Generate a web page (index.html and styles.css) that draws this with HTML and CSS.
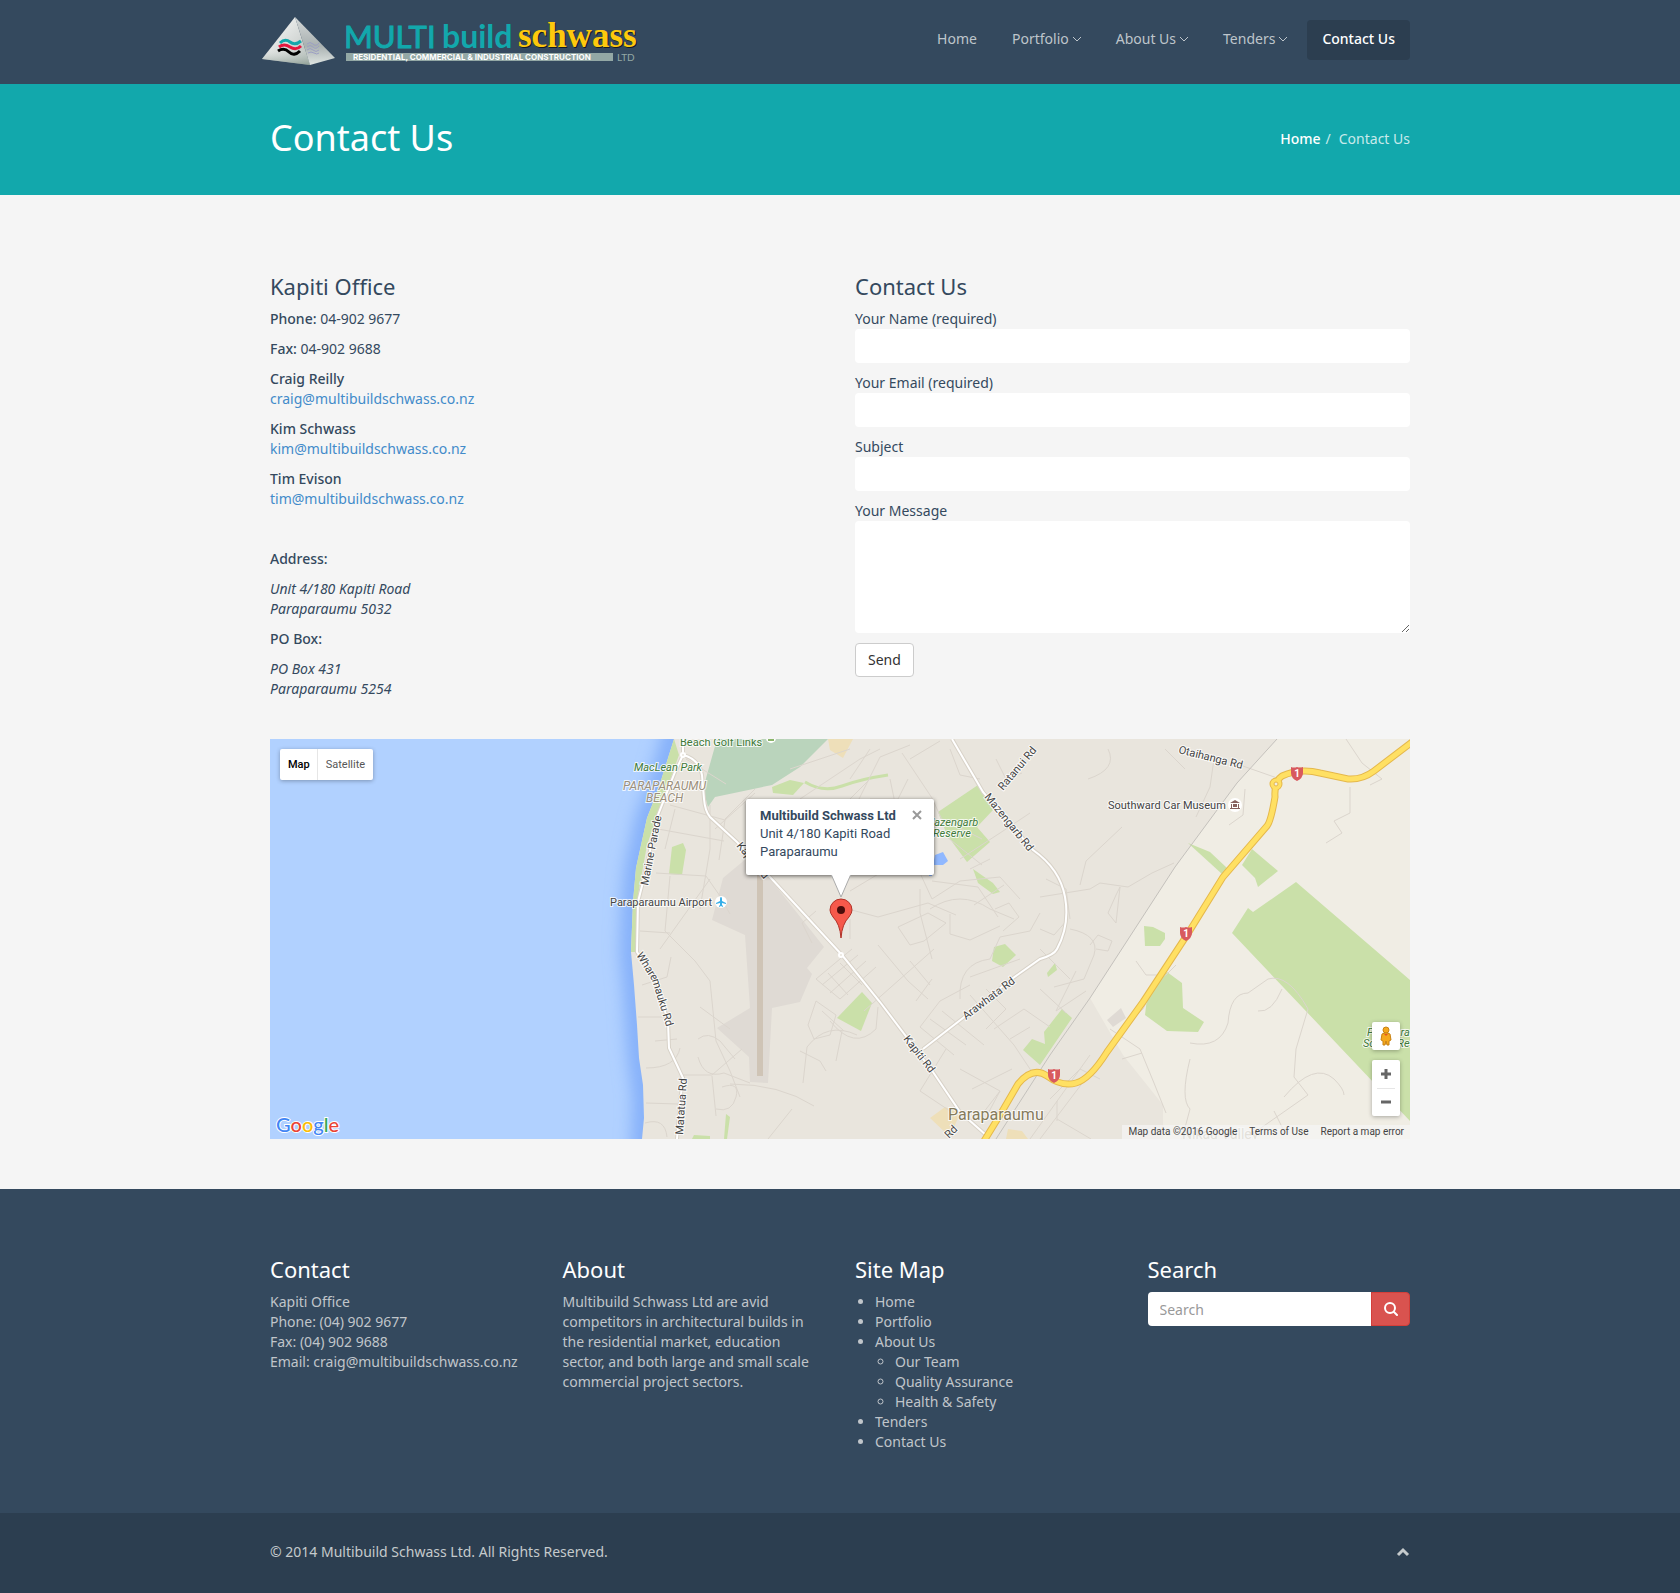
FILE: index.html
```html
<!DOCTYPE html>
<html lang="en">
<head>
<meta charset="utf-8">
<meta name="viewport" content="width=device-width, initial-scale=1">
<title>Contact Us | Multibuild Schwass Ltd</title>
<link rel="stylesheet" href="styles.css">
</head>
<body>
<header class="site-header">
  <div class="container header-row">
    <a class="logo" href="#" aria-label="Multibuild Schwass Ltd">
      <svg width="376" height="54" viewBox="0 0 376 54">
        <defs>
          <linearGradient id="face-left" x1="0" y1="0" x2="1" y2="1">
            <stop offset="0" stop-color="#ffffff"/><stop offset="0.6" stop-color="#d4d8d6"/><stop offset="1" stop-color="#a9b5af"/>
          </linearGradient>
          <linearGradient id="face-right" x1="0" y1="0" x2="0" y2="1">
            <stop offset="0" stop-color="#d5d9d9"/><stop offset="0.6" stop-color="#a9b1b1"/><stop offset="1" stop-color="#dfe5e2"/>
          </linearGradient>
          <linearGradient id="face-base" x1="0" y1="0" x2="0" y2="1">
            <stop offset="0" stop-color="#ffffff" stop-opacity="0"/><stop offset="1" stop-color="#7d9186"/>
          </linearGradient>
        </defs>
        <path d="M33 3 L0 45 L48 51Z" fill="url(#face-left)"/>
        <path d="M10 32 L0 45 L48 51 L45 36Z" fill="url(#face-base)" opacity=".6"/>
        <path d="M33 3 L48 51 L73 44Z" fill="url(#face-right)"/>
        <g fill="none" stroke-width="3">
          <path d="M18 29q5-5 10-1t11-1" stroke="#12a8ac"/>
          <path d="M17 33q5-4 11 0t11-1" stroke="#e3173e"/>
          <path d="M16 37q6-4 11 1t11-1" stroke="#000"/>
        </g>
        <g fill="none" stroke="#9c9fc4" stroke-width="1">
          <path d="M45 30q3-3 6 0t6-1"/><path d="M45 33q3-3 6 0t6-1"/><path d="M45 36q3-3 6 0t6 0"/><path d="M46 39q3-2 6 0t5 0"/>
        </g>
        <text class="logo-multi" x="82" y="34">MULTI</text>
        <text class="logo-build" x="180" y="34">build</text>
        <text class="logo-schwass logo-shade" x="257" y="34">schwass</text>
        <text class="logo-schwass" x="256" y="33">schwass</text>
        <rect x="84" y="39" width="267" height="8" fill="#93a8a5"/>
        <text class="logo-tag" x="91" y="46">RESIDENTIAL, COMMERCIAL &amp; INDUSTRIAL CONSTRUCTION</text>
        <text class="logo-ltd" x="355" y="47">LTD</text>
      </svg>
    </a>
    <nav class="main-nav" aria-label="Main">
      <a href="#">Home</a>
      <a href="#">Portfolio <svg class="chevron" viewBox="0 0 8 6"><path d="M0 1l4 4 4-4"/></svg></a>
      <a href="#">About Us <svg class="chevron" viewBox="0 0 8 6"><path d="M0 1l4 4 4-4"/></svg></a>
      <a href="#">Tenders <svg class="chevron" viewBox="0 0 8 6"><path d="M0 1l4 4 4-4"/></svg></a>
      <a class="active" href="#">Contact Us</a>
    </nav>
  </div>
</header>

<section class="title-bar">
  <div class="container title-row">
    <h1>Contact Us</h1>
    <ol class="breadcrumb">
      <li><a href="#">Home</a></li>
      <li>Contact Us</li>
    </ol>
  </div>
</section>

<main class="container content">
  <div class="columns">
    <section class="office">
      <h2>Kapiti Office</h2>
      <p><strong>Phone:</strong> 04-902 9677</p>
      <p><strong>Fax:</strong> 04-902 9688</p>
      <p><strong>Craig Reilly</strong><br><a href="#">craig@multibuildschwass.co.nz</a></p>
      <p><strong>Kim Schwass</strong><br><a href="#">kim@multibuildschwass.co.nz</a></p>
      <p><strong>Tim Evison</strong><br><a href="#">tim@multibuildschwass.co.nz</a></p>
      <p class="spaced"><strong>Address:</strong></p>
      <address>Unit 4/180 Kapiti Road<br>Paraparaumu 5032</address>
      <p><strong>PO Box:</strong></p>
      <address>PO Box 431<br>Paraparaumu 5254</address>
    </section>
    <section>
      <h2>Contact Us</h2>
      <form class="contact-form">
        <div class="field"><label for="name">Your Name (required)</label><input id="name" type="text"></div>
        <div class="field"><label for="email">Your Email (required)</label><input id="email" type="email"></div>
        <div class="field"><label for="subject">Subject</label><input id="subject" type="text"></div>
        <div class="field"><label for="message">Your Message</label><textarea id="message"></textarea></div>
        <button class="send" type="button">Send</button>
      </form>
    </section>
  </div>

  <section class="map" aria-label="Map">
    <svg class="map-canvas" viewBox="0 0 1140 400" preserveAspectRatio="xMidYMid slice">
      <defs>
        <filter id="soft" filterUnits="userSpaceOnUse" x="280" y="-40" width="240" height="480"><feGaussianBlur stdDeviation="9"/></filter>
        <path id="shield" d="M-6 -6q3 1 6 0q3 1 6 0v6q0 5-6 8q-6-3-6-8z"/>
      </defs>
      <rect width="1140" height="400" fill="#b1d1ff"/>
      <path d="M408 -20L388 51L377 79L366 129L363 163L361 213L364 246L369 319L374 360L372 420" fill="none" stroke="#79a7f8" stroke-width="18" filter="url(#soft)"/>
      <path d="M404 0L388 51L377 79L366 129L363 163L361 213L364 246L367 286L369 319L373 346L374 379L372 400H1140V0Z" fill="#e9e5dd"/>
      <path d="M1007 0H1140V400H893V366L853 316L820 259L905 128L967 44Z" fill="#f0ede4"/>
      <g fill="#dfdad4">
        <path d="M477 119L497 136L554 208L537 229L542 235L530 263L502 269L498 344L480 343L479 318L447 289L480 269L475 196L442 181L453 139Z"/>
        <path d="M837 281L851 269L856 279L843 288Z"/>
      </g>
      <rect x="487" y="134" width="6" height="203" fill="#cfc4b6"/>
      <g fill="#eedfb9">
        <path d="M558 0H583L573 19L560 11Z"/>
        <path d="M660 379L675 368L690 374L680 398Z"/>
        <path d="M738 390L752 392L758 400H736Z"/>
      </g>
      <path d="M447 0H558L530 28L502 46L445 58L438 68L433 50Z" fill="#bad4bc"/>
      <g fill="#cae0a9">
        <path d="M404 0L409 16L392 63L377 106L368 156L367 213H361L363 163L366 129L377 79L388 51Z"/>
        <path d="M402 108L413 104L416 111L412 136L399 135Z"/>
        <path d="M502 48L520 41L534 44L523 56L503 54Z"/>
        <path d="M668 73L708 46L723 71L707 88L720 103L697 123L677 96Z"/>
        <path d="M703 130L723 144L730 153L723 155L708 144Z"/>
        <path d="M724 208L735 205L746 216L733 228L722 222Z"/>
        <path d="M567 279L592 253L602 264L591 292Z"/>
        <path d="M777 234L785 224L787 231L778 238Z"/>
        <path d="M792 270L802 279L770 326L753 311L762 300L775 305L774 293Z"/>
        <path d="M918 104L940 113L957 129L952 135Z"/>
        <path d="M982 110L1008 132L988 148L985 139L972 126Z"/>
        <path d="M874 187L883 188L895 194V200L890 207H875Z"/>
        <path d="M897 233L912 244L913 269L934 283L928 293L897 292L875 276L877 259Z"/>
        <path d="M1026 143L1140 241V382L962 194L978 169L983 173Z"/>
        <path d="M424 396L440 397V400H422ZM456 375L460 378L457 400H454Z"/>
      </g>
      <path d="M535 43Q553 54 572 47T618 36" fill="none" stroke="#cae0a9" stroke-width="3"/>
      <path d="M663 126L665 116L673 113L678 122L673 126ZM659 134h3v3h-3z" fill="#90b8ff"/>
      <g class="street">
        <path d="M416 20l40 25M400 66l55 15-6 40M405 70l-10 40M388 90l66 12M386 134l50 3 14 20 10 18M440 66v44l-10 60M455 80l30-30M445 90l40-36M400 137l-5 55 30 30 15 20 6 60 14 30 10 26M440 140l-50 70M370 192l30 2M372 246l25-8 4-20M368 278h27l10 8M385 302l22-2M376 329q30 0 34-20"/>
        <path d="M412 336h30l30-26M428 300q10-8 22 2l15 18M428 318q6 22 26 16l26 10M442 337l4 40M452 348q18-6 14 10t-20 12M376 364l32 1M375 384q20-6 22 14M430 268l30 22M460 345q50 0 84 22M522 370l-24 30"/>
        <path d="M520 30l60-20M530 60l60-40 20-10M560 80l40-40M580 78l30-60 30-12M600 60h28l10-20M620 40l5 24 20 12M632 14l30 45 10 22M600 10l-20 30M640 20l30-18M680 10l10 26 20 4M726 20l10 20 16-6"/>
        <path d="M650 62l12 24 50 40M672 80l40 20M660 100l-20 10M690 120l40-26 30-20M700 130l20-10M650 134l12 26 28-18 40-4 20 22M662 142l46 6 20 30M650 150v24l12 46M628 188l30-14 18 10-22 18-14 4ZM660 170q30-20 60 0l24 10M680 175v20l20 6 30-14M725 170l14-6 10 14-16 14M704 166l30-20M580 152l60-36M578 170l30 8 50-14 28 12"/>
        <path d="M546 172l-14 12 10 20M580 200v-20M608 206l30 36 20 18M664 210l-70 62M640 222l20 24M662 240l-16 22"/>
        <path d="M546 240l36-30M552 246l36-30M560 254l36-32M570 260l36-32M546 240l24 20M558 234l20 22M570 224l22 22"/>
        <path d="M546 262l20 14-6 20-16 4-6-14ZM552 272l22 20M560 282q24 30 46 8l2-22M572 292l-6 30M533 344l4-36q20-26 50-12M530 312l20 10 6 10"/>
        <path d="M650 288l34 28M660 280l36 26M672 272l42 34M700 256l44 50 20 30M716 250l20 20-20 20M650 288l20-26 30-16M690 260q-2-36 30-40l10-22 30-6 10-18M700 238l50-18M724 290l30-20 26 18M740 300l20-12M676 310l-26 42 30 20M690 330l40 22-20 26M702 350l40-20M730 352l-16 30"/>
        <path d="M770 158l50-8 10-6 28 4 24-14 22-10M810 146l6-24 36-34M770 190l14 6 14-16M800 190q30 6 24 26l-10 24-30 8M770 210l30 30M800 180l-4-30-20-10M850 148l-4 36-8-10 8-18ZM820 206l8-10 14 6-4 10-12-2M806 232l-20 40 30-20M838 10q10 20-20 30M944 20l-4 28-14 30M895 10l20 20M975 50l-2 26-14 10M770 250l26 24"/>
        <path d="M1010 40l-40-14M1076 0l16 24 20 16-12 6M1080 48v26l-16 8 8 12-16 10"/>
        <path d="M866 222l10 14h20l10-10M840 290l30 20 14 34 12 30M852 320l20-6M893 230l-20 40-30 30M920 320q-10 40 0 50l-8 30M920 304q30 6 38-20 2-30 20-30l20-14q20-6 40 30l-12 40-2 28 14 18-80 56M1012 250q-10 24-24 22M1014 358q30-36 50-18 10 10 10 16M1004 372l10 20"/>
        <path d="M760 400l60-84M770 400l56-74M780 360l30-30 20 10M787 380l34 20M787 362v20"/>
      </g>
      <path d="M1007 0L967 44L905 128L820 259L780 316L726 400" fill="none" stroke="#c4c1bc" stroke-width="1"/>
      <g class="road road-edge">
        <path d="M413 0L413 16L405 33L388 76L373 143L368 163L367 213L387 243L398 283L399 309L413 339L410 363L407 400M413 16Q429 20 432 36L434 60Q435 72 440 78L467 103L500 138L572 216L610 263L663 333L690 373L716 396M682 0L713 53L730 73L763 111Q790 130 795 158T787 210Q784 216 770 220L743 239L693 279L653 310"/>
      </g>
      <g class="road">
        <path d="M413 0L413 16L405 33L388 76L373 143L368 163L367 213L387 243L398 283L399 309L413 339L410 363L407 400M413 16Q429 20 432 36L434 60Q435 72 440 78L467 103L500 138L572 216L610 263L663 333L690 373L716 396M682 0L713 53L730 73L763 111Q790 130 795 158T787 210Q784 216 770 220L743 239L693 279L653 310"/>
      </g>
      <g fill="#e9e5dd" stroke="#fff" stroke-width="2"><circle cx="571" cy="216" r="2"/><circle cx="413" cy="16" r="2"/></g>
      <g class="highway highway-edge"><path d="M1142 3L1104 32Q1092 41 1078 40L1050 34Q1030 29 1012 37Q1004 42 1005 58Q1001 82 997 87L953 138L917 196L873 263L837 313Q820 340 806 344T777 337Q763 327 748 345L730 376L714 402"/><circle cx="1006" cy="45" r="3"/></g>
      <g class="highway"><path d="M1142 3L1104 32Q1092 41 1078 40L1050 34Q1030 29 1012 37Q1004 42 1005 58Q1001 82 997 87L953 138L917 196L873 263L837 313Q820 340 806 344T777 337Q763 327 748 345L730 376L714 402"/><circle cx="1006" cy="45" r="3"/></g>
      <circle cx="1006" cy="45" r="2" fill="#f0ede4" stroke="#e5b84c"/>
      <g class="shields">
        <use href="#shield" x="1027" y="34"/><text x="1027" y="38">1</text>
        <use href="#shield" x="916" y="194"/><text x="916" y="198">1</text>
        <use href="#shield" x="784" y="336"/><text x="784" y="340">1</text>
      </g>
      <g class="map-label park">
        <text x="410" y="7">Beach Golf Links</text>
        <text class="slant" x="364" y="32">MacLean Park</text>
        <text class="slant" x="655" y="87">Mazengarb</text>
        <text class="slant" x="663" y="98">Reserve</text>
        <text class="slant" x="1097" y="297">Paraparau</text>
        <text class="slant" x="1093" y="308">Scenic Res</text>
      </g>
      <g class="map-label suburb"><text x="353" y="51">PARAPARAUMU</text><text x="376" y="63">BEACH</text></g>
      <g class="map-label">
        <text x="340" y="167">Paraparaumu Airport</text>
        <text x="838" y="70">Southward Car Museum</text>
        <text transform="translate(378 147) rotate(-79)">Marine Parade</text>
        <text transform="translate(366 216) rotate(58)">Whare</text>
        <text transform="translate(382 241) rotate(73)">mauku Rd</text>
        <text transform="translate(413 396) rotate(-86)">Matatua Rd</text>
        <text transform="translate(466 107) rotate(50)">Kapiti Rd</text>
        <text transform="translate(633 300) rotate(52)">Kapiti Rd</text>
        <text transform="translate(733 52) rotate(-50)">Ratanui Rd</text>
        <text transform="translate(714 58) rotate(51)">Mazengarb Rd</text>
        <text transform="translate(696 281) rotate(-37)">Arawhata Rd</text>
        <text transform="translate(908 14) rotate(14)">Otaihanga Rd</text>
        <text transform="translate(679 400) rotate(-45)">Rd</text>
      </g>
      <text class="map-label town" x="678" y="381">Paraparaumu</text>
      <text class="map-label valley" x="912" y="400">Nikau Valley</text>
      <circle cx="451" cy="163" r="6" fill="#fff"/>
      <path d="M451 158q1 0 1 2v2l4 2v1l-4-1v2l1 1v1l-2-1-2 1v-1l1-1v-2l-4 1v-1l4-2v-2q0-2 1-2z" fill="#35aee8"/>
      <circle cx="965" cy="66" r="7" fill="#fff"/>
      <path d="M960 64l5-3 5 3zM961 65h1v4h-1zM968 65h1v4h-1zM960 69h10v1h-10zM963 65h4v3h-4z" fill="#87615f"/>
      <circle cx="501" cy="-1" r="5" fill="#fff"/><path d="M498 0h6v2h-6z" fill="#8bb56b"/>
      <path d="M571 199Q570 185 563 178Q560 174 560 171A11 11 0 0 1 582 171Q582 174 579 178Q572 185 571 199Z" fill="#f6594b" stroke="#b03228"/>
      <circle cx="571" cy="171" r="4" fill="#4a0d0b"/>
    </svg>
    <svg class="google" width="70" height="30" viewBox="0 0 70 30" aria-label="Google">
      <text x="2" y="23"><tspan fill="#4285f4">G</tspan><tspan fill="#ea4335">o</tspan><tspan fill="#fbbc05">o</tspan><tspan fill="#4285f4">g</tspan><tspan fill="#34a853">l</tspan><tspan fill="#ea4335">e</tspan></text>
    </svg>
    <div class="map-types">
      <button class="selected" type="button">Map</button>
      <button type="button">Satellite</button>
    </div>
    <div class="info">
      <strong>Multibuild Schwass Ltd</strong>
      <span>Unit 4/180 Kapiti Road</span>
      <span>Paraparaumu</span>
      <button class="info-close" type="button" aria-label="Close"><svg width="10" height="10" viewBox="0 0 10 10"><path d="M1 1l8 8M9 1l-8 8" stroke="#999" stroke-width="2"/></svg></button>
      <svg class="info-tail" width="20" height="24" viewBox="0 0 20 24"><path d="M0 0L10 23L20 0" fill="#fff" stroke="#aaa"/><path d="M0 0h20" stroke="#fff" stroke-width="2"/></svg>
    </div>
    <div class="map-controls">
      <button class="pegman" type="button" aria-label="Street View">
        <svg width="14" height="20" viewBox="0 0 14 20"><path d="M3 8q4-3 8 0l1 6-2 1v4H8l-1-4-1 4H4v-4l-2-1z" fill="#f5a81c" stroke="#c78113"/><circle cx="7" cy="4" r="3" fill="#f5a81c" stroke="#c78113"/><path d="M5 8l2 2 2-2z" fill="#e2571e"/></svg>
      </button>
      <div class="zoom">
        <button type="button" aria-label="Zoom in"><svg width="10" height="10" viewBox="0 0 10 10"><path d="M0 5h10M5 0v10" stroke="#666" stroke-width="3"/></svg></button>
        <button type="button" aria-label="Zoom out"><svg width="10" height="10" viewBox="0 0 10 10"><path d="M0 5h10" stroke="#666" stroke-width="3"/></svg></button>
      </div>
    </div>
    <div class="attribution"><span>Map data ©2016 Google</span><a href="#">Terms of Use</a><a href="#">Report a map error</a></div>
  </section>
</main>

<footer>
  <div class="footer-main">
    <div class="container footer-columns">
      <section><h2>Contact</h2><p>Kapiti Office<br>Phone: (04) 902 9677<br>Fax: (04) 902 9688<br>Email: craig@multibuildschwass.co.nz</p></section>
      <section><h2>About</h2><p>Multibuild Schwass Ltd are avid competitors in architectural builds in the residential market, education sector, and both large and small scale commercial project sectors.</p></section>
      <section>
        <h2>Site Map</h2>
        <ul class="sitemap">
          <li><a href="#">Home</a></li>
          <li><a href="#">Portfolio</a></li>
          <li><a href="#">About Us</a>
            <ul>
              <li><a href="#">Our Team</a></li>
              <li><a href="#">Quality Assurance</a></li>
              <li><a href="#">Health &amp; Safety</a></li>
            </ul>
          </li>
          <li><a href="#">Tenders</a></li>
          <li><a href="#">Contact Us</a></li>
        </ul>
      </section>
      <section>
        <h2>Search</h2>
        <form class="search">
          <input type="search" placeholder="Search" aria-label="Search">
          <button type="button" aria-label="Search"><svg width="14" height="14" viewBox="0 0 14 14"><circle cx="6" cy="6" r="5" fill="none" stroke="#fff" stroke-width="2"/><path d="M10 10l3 3" stroke="#fff" stroke-width="2" stroke-linecap="round"/></svg></button>
        </form>
      </section>
    </div>
  </div>
  <div class="footer-bottom">
    <div class="container footer-row">
      <span>© 2014 Multibuild Schwass Ltd. All Rights Reserved.</span>
      <a href="#" aria-label="Back to top"><svg width="14" height="10" viewBox="0 0 14 10"><path d="M2 8l5-5 5 5" fill="none" stroke="#c5cacc" stroke-width="3"/></svg></a>
    </div>
  </div>
</footer>
</body>
</html>
```
FILE: styles.css
```css
*, *::before, *::after { box-sizing: border-box; }
body {
  margin: 0;
  background: #f5f5f5;
  color: #34495e;
  font: 14px/20px "Noto Sans", "Open Sans", sans-serif;
}
a { color: #428bca; text-decoration: none; }
h1, h2 { margin: 0; font-weight: 400; }
h2 { font-size: 22px; line-height: 26px; margin-bottom: 10px; }
p, address { margin: 0 0 10px; }
strong { font-weight: 500; }
button, input, textarea { font: inherit; color: inherit; }
button { cursor: pointer; }
.container { max-width: 1170px; margin: 0 auto; padding: 0 15px; }

.site-header { background: #34495e; }
.header-row { display: flex; justify-content: space-between; align-items: flex-start; min-height: 84px; padding-top: 14px; }
.logo { margin-left: -8px; }
.logo svg { display: block; }
.logo-multi { font: 400 31px Lato, sans-serif; fill: #12a8ac; stroke: #12a8ac; }
.logo-build { font: 700 32px Lato, sans-serif; fill: #12a8ac; }
.logo-schwass { font: 700 35px "Liberation Serif", serif; fill: #fdc90d; }
.logo-shade { fill: #141c24; }
.logo-tag { font: 700 8px Inter, sans-serif; fill: #fff; }
.logo-ltd { font: 400 10px Lato, sans-serif; fill: #93a8a5; }
.main-nav { display: flex; gap: 5px; padding-top: 6px; }
.main-nav a { display: flex; align-items: center; gap: 4px; padding: 9px 15px 11px; line-height: 20px; border-radius: 4px; color: #bec5cb; }
.main-nav .active { background: #2c3e50; color: #fff; font-weight: 500; }
.chevron { width: 8px; height: 6px; fill: none; stroke: currentColor; }

.title-bar { background: #12a8ac; color: #fff; }
.title-row { display: flex; justify-content: space-between; align-items: center; min-height: 111px; padding-bottom: 2px; }
h1 { font-size: 36px; line-height: 40px; padding-bottom: 2px; }
.breadcrumb { display: flex; margin: 0; padding: 0; list-style: none; color: #c8eaeb; }
.breadcrumb a { color: #fff; font-weight: 500; }
.breadcrumb li + li::before { content: "/"; padding: 0 8px 0 5px; }

.content { padding-top: 78px; padding-bottom: 50px; }
.columns { display: grid; grid-template-columns: 1fr 1fr; gap: 30px; margin-bottom: 30px; }
.spaced { margin-top: 40px; }
.field { margin-bottom: 10px; }
.field label { display: block; }
.field input, .field textarea { display: block; width: 100%; height: 34px; padding: 6px 12px; border: 0; border-radius: 4px; background: #fff; }
.field textarea { height: 112px; resize: vertical; }
.send { padding: 6px 12px; border: 1px solid #ccc; border-radius: 4px; background: #fff; color: #333; }

.map { position: relative; height: 400px; overflow: hidden; font: 11px/14px Roboto, sans-serif; }
.map-canvas { display: block; width: 100%; height: 100%; }
.street { fill: none; stroke: #dbd5cd; }
.road { fill: none; stroke: #fff; stroke-width: 2; }
.road-edge { stroke: #d8d2c8; stroke-width: 4; }
.highway { fill: none; stroke: #ffe063; stroke-width: 5; }
.highway-edge { stroke: #e5b84c; stroke-width: 7; }
.shields { fill: #d85a5e; text-anchor: middle; }
.shields text { fill: #fff; font: 700 10px Roboto, sans-serif; }
.map-label { font: 11px Roboto, sans-serif; fill: #444; stroke: #fff; stroke-width: 2px; stroke-opacity: .8; paint-order: stroke; }
.park { fill: #3f7a3a; }
.slant, .suburb { font-style: italic; }
.suburb { fill: #9b8f7b; font-size: 12px; }
.town { fill: #857b5c; font-size: 16px; }
.valley { fill: #b7b09c; font-size: 14px; }
.google { position: absolute; left: 4px; bottom: 0; }
.google text { font: 500 20px Lato, sans-serif; stroke: #fff; stroke-width: 2px; paint-order: stroke; }
.map-types { position: absolute; left: 10px; top: 10px; display: flex; background: #fff; border-radius: 2px; box-shadow: 0 1px 4px rgba(0,0,0,.3); }
.map-types button { padding: 8px; border: 0; background: none; line-height: 15px; color: #565656; }
.map-types .selected { padding-right: 7px; border-right: 1px solid #e6e6e6; color: #000; font-weight: 500; }
.info { position: absolute; left: 50%; top: 60px; width: 188px; height: 76px; padding: 8px 14px; transform: translateX(-50%); background: #fff; border-radius: 2px; box-shadow: 0 1px 4px rgba(0,0,0,.6); font-size: 13px; line-height: 18px; }
.info strong, .info span { display: block; }
.info strong { font-weight: 700; }
.info-close { position: absolute; right: 12px; top: 11px; padding: 0; border: 0; background: none; line-height: 0; }
.info-tail { position: absolute; left: 85px; top: 75px; }
.map-controls { position: absolute; right: 10px; bottom: 23px; display: grid; gap: 10px; }
.map-controls button { display: grid; place-items: center; width: 28px; height: 28px; padding: 0; border: 0; background: none; }
.map-controls .pegman, .zoom { background: #fff; border-radius: 2px; box-shadow: 0 1px 4px rgba(0,0,0,.3); }
.zoom button + button { background: linear-gradient(#e6e6e6, #e6e6e6) center top / 18px 1px no-repeat; }
.attribution { position: absolute; right: 0; bottom: 0; display: flex; gap: 12px; padding: 0 6px; background: rgba(245,245,245,.7); font-size: 10px; color: #444; }
.attribution a { color: inherit; }

.footer-main { background: #34495e; color: #c0c5ca; padding: 67px 0 61px; }
.footer-main h2 { color: #fff; }
.footer-main a { color: inherit; }
.footer-main p { margin: 0; }
.footer-columns { display: grid; grid-template-columns: repeat(4, minmax(0, 1fr)); gap: 30px; }
.sitemap, .sitemap ul { margin: 0; padding-left: 20px; }
.search { display: flex; }
.search input { flex: 1; min-width: 0; height: 34px; padding: 6px 12px; border: 0; border-radius: 4px 0 0 4px; background: #fff; color: #555; }
.search input::placeholder { color: #999; }
.search button { display: grid; place-items: center; width: 39px; padding: 0; border: 1px solid #d43f3a; border-radius: 0 4px 4px 0; background: #d9534f; }
.footer-bottom { background: #2c3e50; color: #c5cacc; }
.footer-row { display: flex; justify-content: space-between; align-items: center; min-height: 80px; padding-bottom: 2px; }
```
